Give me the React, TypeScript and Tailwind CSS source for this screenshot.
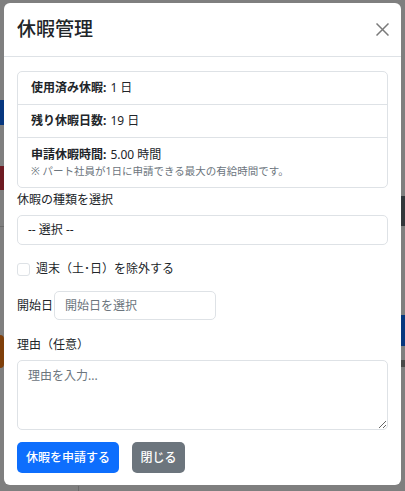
const font = { fontFamily: '"Noto Sans", "Noto Sans CJK JP", sans-serif' };

function Backdrop() {
  // pieces of the page behind the dimmed overlay that peek out at the edges
  return (
    <>
      <div className="absolute left-0 top-[100px] h-[25px] w-[4px] bg-[#07377f]" />
      <div className="absolute left-0 top-[166px] h-[24px] w-[4px] bg-[#6e1b22]" />
      <div className="absolute left-0 top-[226px] h-px w-[4px] bg-[#6a6a6a]" />
      <div className="absolute left-0 top-[335px] h-[33px] w-[4px] rounded-r bg-[#7f3f0a]" />
      <div className="absolute right-0 top-[196px] h-[30px] w-[4px] bg-[#33373b]" />
      <div className="absolute right-0 top-[315px] h-[31px] w-[4px] bg-[#07377f]" />
      <div className="absolute right-0 top-[360px] h-[7px] w-[4px] bg-[#4a4a4a]" />
      <div className="absolute left-[78px] top-[486px] h-[5px] w-px bg-[#6a6a6a]" />
    </>
  );
}

export default function App() {
  return (
    <div
      className="relative h-[491px] w-[405px] overflow-hidden bg-[#7f7f7f] pl-[4px] pt-[3px] text-[#212529]"
      style={font}
    >
      <Backdrop />
      <div className="relative flex h-[482px] w-[397px] flex-col rounded-[6px] bg-white">
        <div className="flex h-[54px] items-center justify-between border-b border-[#dee2e6] pl-[13px] pr-[12px]">
          <h5 className="text-[19px] font-medium leading-none">休暇管理</h5>
          <button className="text-[#7a7a7a]">
            <svg width="13" height="13" viewBox="0 0 13 13" fill="none" stroke="currentColor" strokeWidth="1.5">
              <path d="M0.5 0.5 L12.5 12.5 M12.5 0.5 L0.5 12.5" />
            </svg>
          </button>
        </div>

        <div className="flex flex-col px-[13px] pt-[14px] text-[12px]">
          <ul className="rounded-[5px] border border-[#dee2e6]">
            <li className="flex h-[33px] items-center border-b border-[#dee2e6] px-[13px]">
              <strong className="font-bold">使用済み休暇:</strong>
              <span className="ml-1">1 日</span>
            </li>
            <li className="flex h-[33px] items-center border-b border-[#dee2e6] px-[13px]">
              <strong className="font-bold">残り休暇日数:</strong>
              <span className="ml-1">19 日</span>
            </li>
            <li className="flex h-[49px] flex-col justify-center px-[13px]">
              <div className="leading-[18px]">
                <strong className="font-bold">申請休暇時間:</strong>
                <span className="ml-1">5.00 時間</span>
              </div>
              <small className="text-[10.5px] leading-[15px] text-[#6c757d]">
                ※ パート社員が1日に申請できる最大の有給時間です。
              </small>
            </li>
          </ul>

          <label className="mt-[2px] leading-[20px]">休暇の種類を選択</label>
          <select className="mt-[5px] h-[30px] w-full appearance-none rounded-[5px] border border-[#dee2e6] bg-white px-[10px] text-[12px] outline-none">
            <option>-- 選択 --</option>
          </select>

          <label className="mt-[14px] flex h-[20px] items-center gap-[6px]">
            <input
              type="checkbox"
              className="h-[13px] w-[13px] appearance-none rounded-[3px] border border-[#dee2e6] bg-white"
            />
            <span>週末（土･日）を除外する</span>
          </label>

          <div className="mt-[12px] flex items-center">
            <span className="shrink-0 whitespace-nowrap pr-px">開始日</span>
            <input
              placeholder="開始日を選択"
              className="h-[29px] w-[162px] rounded-[5px] border border-[#dee2e6] px-[10px] text-[12px] outline-none placeholder:text-[#6c757d]"
            />
          </div>

          <label className="mt-[15px] leading-[20px]">理由（任意）</label>
          <textarea
            placeholder="理由を入力..."
            className="mt-[5px] h-[70px] w-full rounded-[5px] border border-[#dee2e6] px-[10px] py-[6px] text-[12px] outline-none placeholder:text-[#6c757d]"
          />

          <div className="mt-[12px] flex gap-[13px]">
            <button className="h-[31px] w-[102px] rounded-[5px] bg-[#0d6efd] text-[12px] font-medium text-white">
              休暇を申請する
            </button>
            <button className="h-[31px] w-[53px] rounded-[5px] bg-[#6c757d] text-[12px] font-medium text-white">
              閉じる
            </button>
          </div>
        </div>
      </div>
    </div>
  );
}
